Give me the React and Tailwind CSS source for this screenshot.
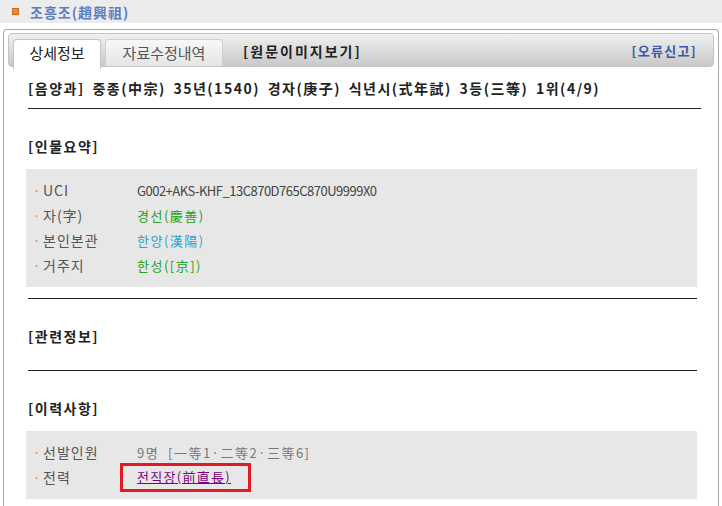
import React from 'react';

const font = { fontFamily: '"Noto Sans CJK KR", "Noto Sans", sans-serif' };

const Row = ({ label, children }) => (
	<div className="flex items-center h-[25px]">
		<span className="w-[10px] text-[#e8762c] text-[13px]">·</span>
		<span className="w-[94px] text-[14px] text-[#555555] tracking-[1px]">{label}</span>
		<span className="text-[13px]">{children}</span>
	</div>
);

const SectionTitle = ({ children }) => (
	<h3 className="text-[14px] font-bold text-[#222222] leading-none tracking-[1.5px]">{children}</h3>
);

const App = () => {
	return (
		<div className="w-[722px] h-[506px] bg-white overflow-hidden" style={font}>
			{/* title strip */}
			<div className="h-[23px] bg-[#ececec] flex items-center pl-[12px]">
				<span className="w-[7px] h-[7px] bg-[#ee8a35] border border-[#c86a1c]" />
				<span className="ml-[11px] text-[14px] font-bold text-[#5d7cc0] leading-none tracking-[1px]">조흥조(趙興祖)</span>
			</div>

			{/* panel */}
			<div className="mt-[6px] ml-[3px] w-[716px] h-[500px] border border-[#a8a8a8] rounded-t-[4px] border-b-0">
				{/* tab bar */}
				<div className="mx-[4px] mt-[3px] h-[34px] rounded-[4px] border border-[#c4c4c4] bg-gradient-to-b from-[#f0f0f0] to-[#c9c9c9] flex items-end pl-[4px] pr-[16px]">
					<div className="w-[88px] h-[30px] bg-white border border-b-0 border-[#c4c4c4] rounded-t-[4px] flex items-center justify-center text-[15px] text-[#222222] -mb-[3px] relative z-10 pb-[2px]">
						상세정보
					</div>
					<div className="ml-[4px] w-[118px] h-[27px] bg-gradient-to-b from-[#f8f8f8] to-[#e4e4e4] border border-b-0 border-[#cfcfcf] rounded-t-[4px] flex items-center justify-center text-[15px] text-[#555555]">
						자료수정내역
					</div>
					<div className="ml-[20px] h-[30px] flex items-center text-[14px] font-bold text-[#222222] tracking-[2px]">
						[원문이미지보기]
					</div>
					<div className="ml-auto h-[30px] flex items-center text-[13px] font-bold text-[#3b58a8] tracking-[1.3px]">
						[오류신고]
					</div>
				</div>

				{/* content */}
				<div className="pl-[24px] pr-[17px]">
					<div className="pt-[11px] pb-[9px] text-[14px] font-semibold text-[#222222] border-b border-[#222222] tracking-[1.5px] [word-spacing:3px]">
						[음양과] 중종(中宗) 35년(1540) 경자(庚子) 식년시(式年試) 3등(三等) 1위(4/9)
					</div>

					<div className="pr-[4px]">
						<div className="pt-[30px] pb-[16px]">
							<SectionTitle>[인물요약]</SectionTitle>
						</div>
						<div className="bg-[#e7e7e7] pl-[7px] py-[9px] -ml-[2px]">
							<Row label="UCI">
								<span className="text-[#444444] tracking-[-0.5px]">G002+AKS-KHF_13C870D765C870U9999X0</span>
							</Row>
							<Row label="자(字)">
								<span className="text-[#22a322] tracking-[1.5px]">경선(慶善)</span>
							</Row>
							<Row label="본인본관">
								<span className="text-[#2aa4d0] tracking-[1.5px]">한양(漢陽)</span>
							</Row>
							<Row label="거주지">
								<span className="text-[#22a322] tracking-[1.5px]">한성([京])</span>
							</Row>
						</div>
						<div className="mt-[11px] border-b border-[#222222]" />

						<div className="pt-[30px] pb-[27px]">
							<SectionTitle>[관련정보]</SectionTitle>
						</div>
						<div className="border-b border-[#222222]" />

						<div className="pt-[30px] pb-[16px]">
							<SectionTitle>[이력사항]</SectionTitle>
						</div>
						<div className="bg-[#e7e7e7] pl-[7px] py-[9px] -ml-[2px]">
							<Row label="선발인원">
								<span className="text-[#777777] tracking-[1.5px]">9명 &nbsp;[一等1·二等2·三等6]</span>
							</Row>
							<Row label="전력">
								<span className="-ml-[17px] inline-block border-[3px] border-[#e01b24] pl-[14px] pr-[17px] pt-[1px] pb-[2px]">
									<a href="#" className="text-[#800080] underline tracking-[1.3px]">전직장(前直長)</a>
								</span>
							</Row>
						</div>
					</div>
				</div>
			</div>
		</div>
	);
};

export default App;
